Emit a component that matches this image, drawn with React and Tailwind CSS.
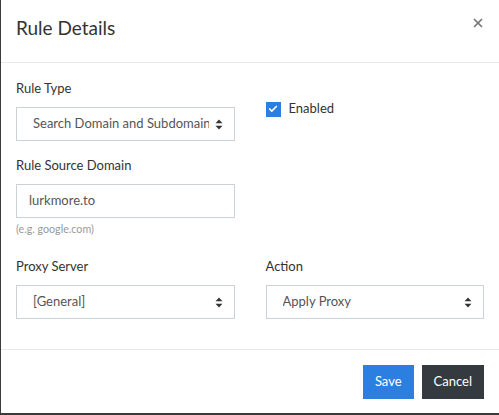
import { Check, X } from "lucide-react"

// little up/down arrows used by the native-looking selects
function SelectArrows() {
  return (
    <svg width="8" height="11" viewBox="0 0 8 11" className="shrink-0">
      <path d="M4 0.5 L7.5 4.3 L0.5 4.3 Z" fill="#333" />
      <path d="M4 10.5 L7.5 6.7 L0.5 6.7 Z" fill="#333" />
    </svg>
  )
}

function FakeSelect({ value }) {
  return (
    <div className="h-[34px] border border-[#ccd1d6] bg-white flex items-center pl-4 pr-[11px] gap-[6px]">
      <span className="flex-1 whitespace-nowrap overflow-hidden text-[13px] text-[#555]">{value}</span>
      <SelectArrows />
    </div>
  )
}

function Label({ children }) {
  return <div className="text-[13px] leading-[18px] text-[#333] mb-[10px]">{children}</div>
}

export default function App() {
  return (
    <div className="w-[499px] h-[415px] bg-[#3b3b3b] overflow-hidden" style={{ fontFamily: "Lato, 'Open Sans', sans-serif" }}>
      <div className="ml-[1px] w-[498px] h-[413px] bg-white flex flex-col">
        {/* header */}
        <div className="h-[63px] shrink-0 flex items-center justify-between pl-[15px] pr-[15px] border-b border-[#e9e9e9]">
          <div className="text-[19px] text-[#333] -mt-[5px]">Rule Details</div>
          <X size={14} strokeWidth={3} className="text-[#777] -mt-[16px] -mr-[1px]" />
        </div>

        {/* body */}
        <div className="flex-1 px-[15px] pt-[16px] grid grid-cols-2 gap-x-[31px] content-start">
          <div>
            <Label>Rule Type</Label>
            <FakeSelect value="Search Domain and Subdomains" />
          </div>
          <div className="pt-[21px]">
            <label className="flex items-center gap-2">
              <span className="w-[15px] h-[15px] bg-[#2a7fe0] flex items-center justify-center">
                <Check size={10} strokeWidth={4} className="text-white" />
              </span>
              <span className="text-[13px] text-[#333] -mt-[1px]">Enabled</span>
            </label>
          </div>

          <div className="mt-[15px]">
            <Label>Rule Source Domain</Label>
            <div className="h-[34px] border border-[#ccd1d6] flex items-center px-3 text-[13px] text-[#555]">lurkmore.to</div>
            <div className="mt-[3px] text-[10.7px] text-[#999]">(e.g. google.com)</div>
          </div>
          <div />

          <div className="mt-[20px]">
            <Label>Proxy Server</Label>
            <FakeSelect value="[General]" />
          </div>
          <div className="mt-[20px]">
            <Label>Action</Label>
            <FakeSelect value="Apply Proxy" />
          </div>
        </div>

        {/* footer */}
        <div className="h-[64px] shrink-0 border-t border-[#e9e9e9] flex items-center justify-end gap-2 pr-[15px]">
          <button className="h-[34px] px-3 bg-[#2a7fe0] text-white text-[13px]">Save</button>
          <button className="h-[34px] px-3 bg-[#343a40] text-white text-[13px]">Cancel</button>
        </div>
      </div>
    </div>
  )
}
